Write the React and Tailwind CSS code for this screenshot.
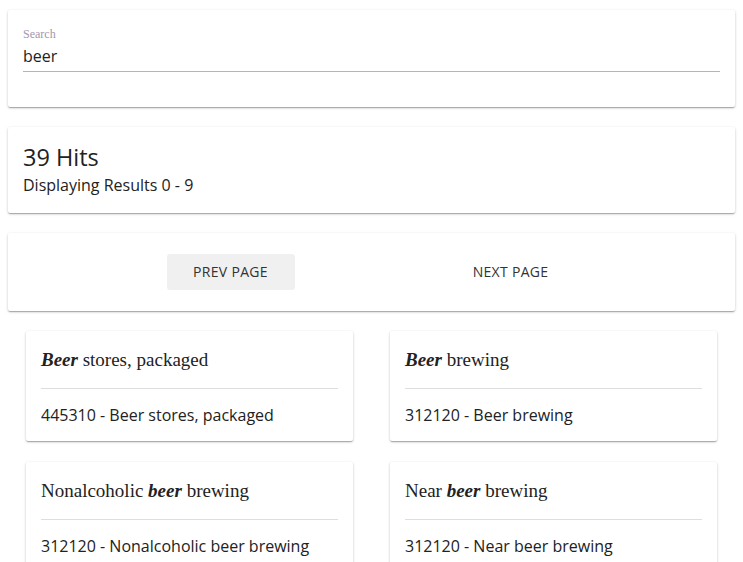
import React from 'react';

const hits = [
  { pre: '', hl: 'Beer', post: ' stores, packaged', code: '445310', name: 'Beer stores, packaged' },
  { pre: '', hl: 'Beer', post: ' brewing', code: '312120', name: 'Beer brewing' },
  { pre: 'Nonalcoholic ', hl: 'beer', post: ' brewing', code: '312120', name: 'Nonalcoholic beer brewing' },
  { pre: 'Near ', hl: 'beer', post: ' brewing', code: '312120', name: 'Near beer brewing' },
];

const card = 'bg-white shadow-[0_1px_3px_rgba(0,0,0,0.2),0_1px_1px_rgba(0,0,0,0.14),0_2px_1px_-1px_rgba(0,0,0,0.12)] rounded-[2px]';

export default function App() {
  return (
    <div className="min-h-screen bg-white px-2 pt-[10px] text-[#222] font-['Open_Sans',sans-serif]">
      {/* Search */}
      <div className={`${card} px-[15px] pt-[15px] h-[97px]`}>
        <label className="block text-[12px] leading-[14px] text-[#a596ad] font-['Liberation_Serif',serif] font-normal pt-[2px]">Search</label>
        <input
          defaultValue="beer"
          className="w-full mt-[3px] text-[16px] leading-[24px] pb-[3px] border-b border-[#b5b5b5] outline-none bg-transparent text-[#222]"
        />
      </div>

      {/* Stats */}
      <div className={`${card} mt-5 px-[15px] pt-[14px] h-[86px]`}>
        <div className="text-[23.5px] leading-[32px] text-[#222]">39 Hits</div>
        <div className="text-[16px] leading-[24px] text-[#222]">Displaying Results 0 - 9</div>
      </div>

      {/* Pagination */}
      <div className={`${card} mt-5 h-[78px] flex items-center justify-center gap-[152px] pr-[2px]`}>
        <button className="w-[128px] h-9 rounded-[3px] bg-[#f0f0f0] text-[14px] tracking-[0.3px] text-[#333] pb-[2px]">PREV PAGE</button>
        <button className="w-[128px] h-9 rounded-[3px] text-[14px] tracking-[0.3px] text-[#333] pb-[2px]">NEXT PAGE</button>
      </div>

      {/* Results */}
      <div className="grid grid-cols-2 gap-x-[37px] gap-y-[21px] px-[18px] mt-5 pb-5">
        {hits.map((h, i) => (
          <div key={i} className={`${card} px-[15px] pt-[15px] pb-[14px]`}>
            <div className="text-[19px] leading-[28px] text-[#222] font-['Liberation_Serif',serif]">
              {h.pre}<em className="font-bold">{h.hl}</em>{h.post}
            </div>
            <div className="mt-[14px] border-t border-[#dedede]" />
            <div className="mt-[14px] text-[16px] leading-[24px] text-[#222]">
              {h.code} - {h.name}
            </div>
          </div>
        ))}
      </div>
    </div>
  );
}
